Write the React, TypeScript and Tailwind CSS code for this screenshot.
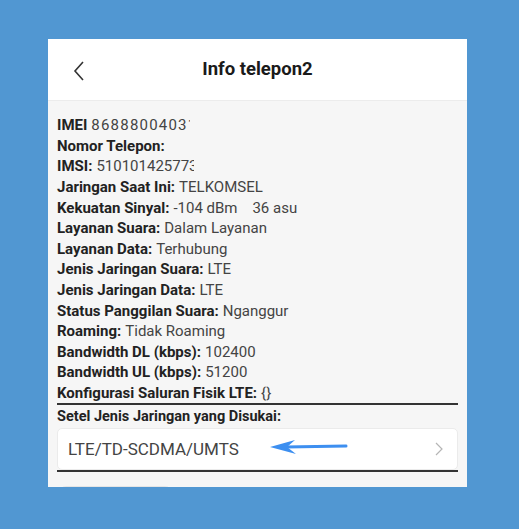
export default function App() {
  const rows: Array<{ label: string; value: string; clip?: string }> = [
    { label: "IMEI", value: "868880040312", clip: "w-[99px] tracking-[1.2px]" },
    { label: "Nomor Telepon:", value: "" },
    { label: "IMSI:", value: "510101425773", clip: "w-[98px]" },
    { label: "Jaringan Saat Ini:", value: "TELKOMSEL" },
    { label: "Kekuatan Sinyal:", value: "-104 dBm\u00a0\u00a0\u00a0\u00a036 asu" },
    { label: "Layanan Suara:", value: "Dalam Layanan" },
    { label: "Layanan Data:", value: "Terhubung" },
    { label: "Jenis Jaringan Suara:", value: "LTE" },
    { label: "Jenis Jaringan Data:", value: "LTE" },
    { label: "Status Panggilan Suara:", value: "Nganggur" },
    { label: "Roaming:", value: "Tidak Roaming" },
    { label: "Bandwidth DL (kbps):", value: "102400" },
    { label: "Bandwidth UL (kbps):", value: "51200" },
    { label: "Konfigurasi Saluran Fisik LTE:", value: "{}" },
  ];

  return (
    <div className="h-[529px] w-[519px] overflow-hidden bg-[#5197d2] pl-[48px] pt-[39px] font-['Roboto',sans-serif]">
      <div className="flex h-[448px] w-[419px] flex-col overflow-hidden bg-[#f6f6f6]">
        {/* Header */}
        <div className="relative flex h-[62px] shrink-0 items-center justify-center border-b border-[#ececec] bg-white">
          <svg
            className="absolute left-[24px] top-[22px]"
            width="14"
            height="20"
            viewBox="0 0 14 20"
            fill="none"
          >
            <path d="M11 1 L3 10 L11 19" stroke="#333" strokeWidth="1.6" />
          </svg>
          <h1 className="text-[18.5px] font-bold text-[#1a1a1a]">Info telepon2</h1>
        </div>

        {/* Info list */}
        <div className="flex flex-col px-[9px] pt-[14px]">
          {rows.map((row, i) => (
            <div key={i} className="flex h-[20.6px] items-center whitespace-nowrap text-[15px] leading-[20px]">
              <span className="font-bold text-[#222]">{row.label}</span>
              {row.value && (
                <span
                  className={`ml-[4px] text-[#444] ${row.clip ? "inline-block overflow-hidden" : ""} ${row.clip ?? ""}`}
                >
                  {row.value}
                </span>
              )}
            </div>
          ))}

          <div className="h-[2px] bg-[#333]" />

          <div className="flex h-[23px] items-center text-[14.5px] font-bold text-[#222]">
            Setel Jenis Jaringan yang Disukai:
          </div>

          <div className="relative flex h-[42px] items-center justify-between rounded-[5px] border border-[#ebebeb] bg-white pl-[10px] pr-[14px]">
            <span className="text-[17px] text-[#444]">LTE/TD-SCDMA/UMTS</span>
            <svg
              className="absolute left-[210px] top-[10px]"
              width="82"
              height="16"
              viewBox="0 0 82 16"
              fill="none"
            >
              <path d="M18 8 L78 7" stroke="#3d8ff0" strokeWidth="3" strokeLinecap="round" />
              <path d="M2 8 L27 1 L19 8 L28 15 Z" fill="#3d8ff0" />
            </svg>
            <svg width="8" height="14" viewBox="0 0 8 14" fill="none">
              <path d="M1 1 L7 7 L1 13" stroke="#b5b5b5" strokeWidth="1.2" />
            </svg>
          </div>

          <div className="h-[2px] bg-[#333]" />

          <div className="ml-[1px] mt-[14px] h-[20px] w-[115px] rounded-t-[8px] border border-[#e5e5e5] bg-white" />
        </div>
      </div>
    </div>
  );
}
